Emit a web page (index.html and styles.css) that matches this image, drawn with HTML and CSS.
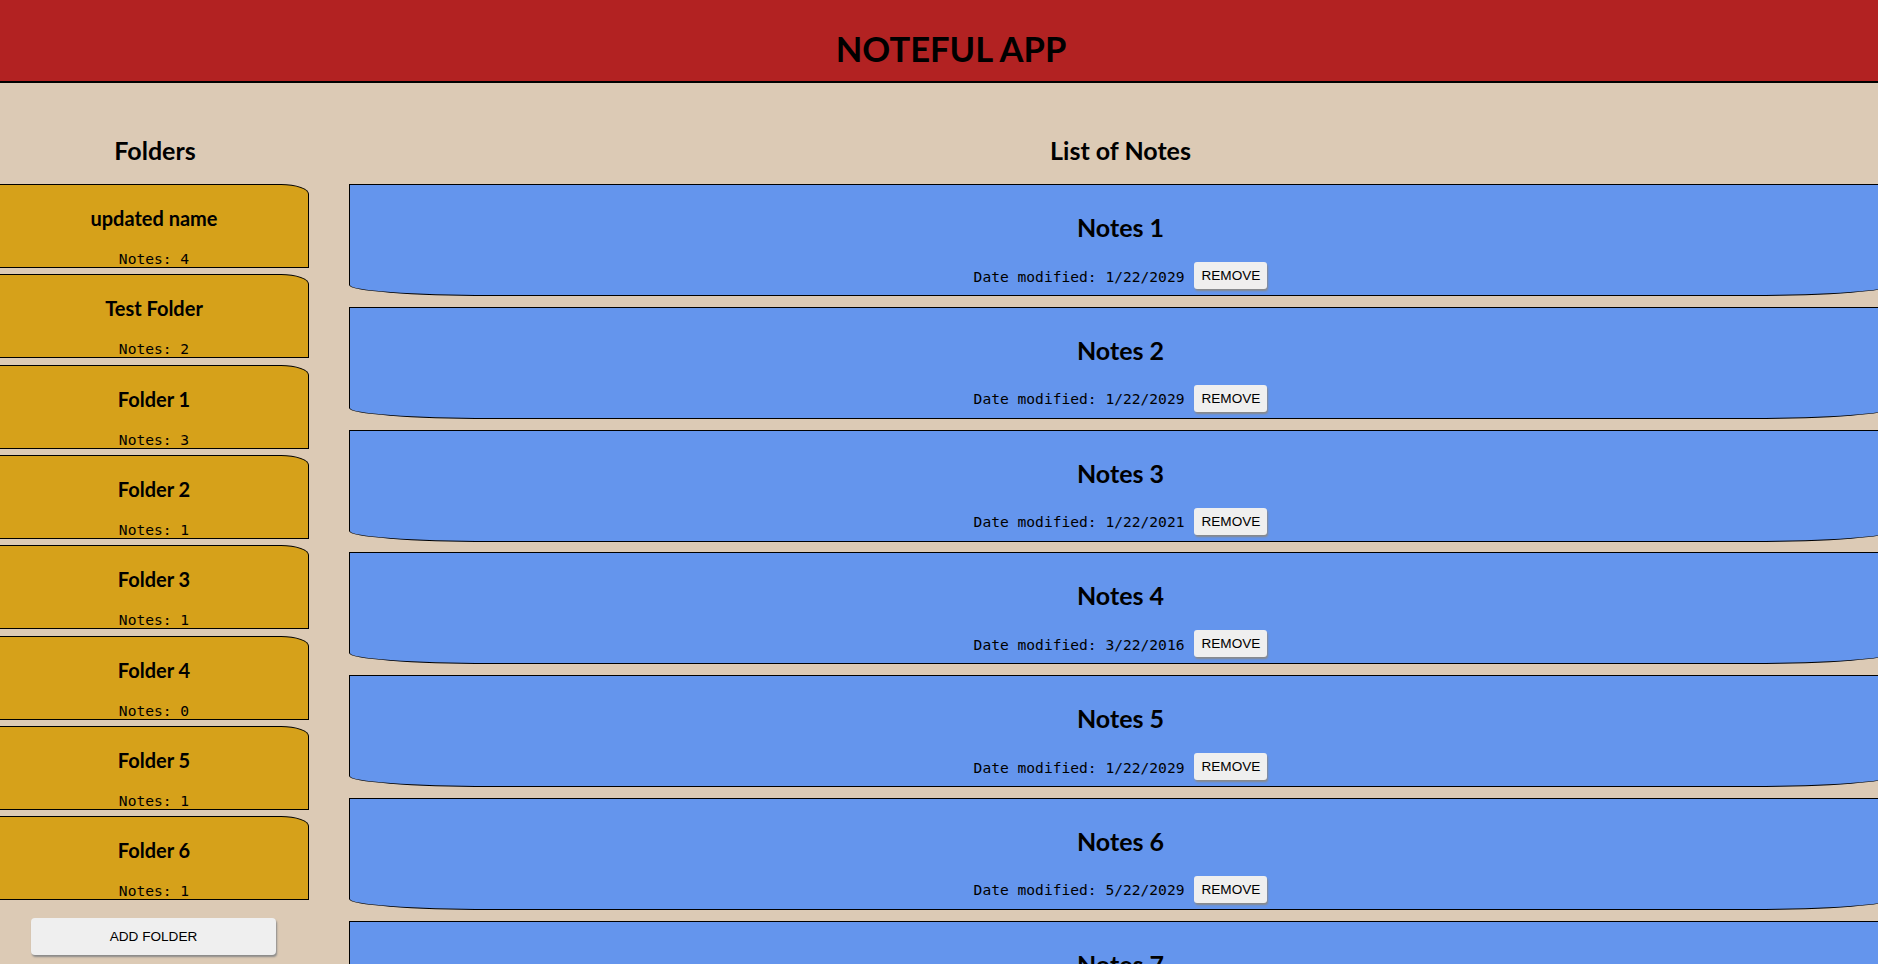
FILE: index.html
```html
<!DOCTYPE html>
<html lang="en">
<head>
<meta charset="utf-8">
<title>Noteful App</title>
<link rel="stylesheet" href="styles.css">
</head>
<body>
<div class="app">
  <header class="app-header">
    <h1 class="app-title">NOTEFUL APP</h1>
  </header>
  <div class="layout">
    <aside class="sidebar">
      <h2 class="section-title">Folders</h2>
      <ul class="folder-list">
        <li class="folder-card"><h3 class="folder-name">updated name</h3><p class="folder-count">Notes: 4</p></li>
        <li class="folder-card"><h3 class="folder-name">Test Folder</h3><p class="folder-count">Notes: 2</p></li>
        <li class="folder-card"><h3 class="folder-name">Folder 1</h3><p class="folder-count">Notes: 3</p></li>
        <li class="folder-card"><h3 class="folder-name">Folder 2</h3><p class="folder-count">Notes: 1</p></li>
        <li class="folder-card"><h3 class="folder-name">Folder 3</h3><p class="folder-count">Notes: 1</p></li>
        <li class="folder-card"><h3 class="folder-name">Folder 4</h3><p class="folder-count">Notes: 0</p></li>
        <li class="folder-card"><h3 class="folder-name">Folder 5</h3><p class="folder-count">Notes: 1</p></li>
        <li class="folder-card"><h3 class="folder-name">Folder 6</h3><p class="folder-count">Notes: 1</p></li>
      </ul>
      <div class="add-row"><button class="btn btn-add" type="button">ADD FOLDER</button></div>
    </aside>
    <main class="notes">
      <h2 class="section-title">List of Notes</h2>
      <ul class="note-list">
        <li class="note-card"><h2 class="note-title">Notes 1</h2><div class="note-meta"><span class="note-date">Date modified: 1/22/2029</span><button class="btn btn-remove" type="button">REMOVE</button></div></li>
        <li class="note-card"><h2 class="note-title">Notes 2</h2><div class="note-meta"><span class="note-date">Date modified: 1/22/2029</span><button class="btn btn-remove" type="button">REMOVE</button></div></li>
        <li class="note-card"><h2 class="note-title">Notes 3</h2><div class="note-meta"><span class="note-date">Date modified: 1/22/2021</span><button class="btn btn-remove" type="button">REMOVE</button></div></li>
        <li class="note-card"><h2 class="note-title">Notes 4</h2><div class="note-meta"><span class="note-date">Date modified: 3/22/2016</span><button class="btn btn-remove" type="button">REMOVE</button></div></li>
        <li class="note-card"><h2 class="note-title">Notes 5</h2><div class="note-meta"><span class="note-date">Date modified: 1/22/2029</span><button class="btn btn-remove" type="button">REMOVE</button></div></li>
        <li class="note-card"><h2 class="note-title">Notes 6</h2><div class="note-meta"><span class="note-date">Date modified: 5/22/2029</span><button class="btn btn-remove" type="button">REMOVE</button></div></li>
        <li class="note-card"><h2 class="note-title">Notes 7</h2><div class="note-meta"><span class="note-date">Date modified: 1/22/2029</span><button class="btn btn-remove" type="button">REMOVE</button></div></li>
      </ul>
    </main>
  </div>
</div>
</body>
</html>
```

FILE: styles.css
```css
html, body {
  margin: 0;
  padding: 0;
  overflow-x: hidden;
}

body {
  background: #dccab5;
  color: #000;
  font-family: Lato, "Noto Sans", sans-serif;
}

.app {
  width: 1902px;
}

.app-header {
  height: 81px;
  background: #b22222;
  border-bottom: 2px solid #000;
  display: flex;
  align-items: center;
  justify-content: center;
}

.app-title {
  margin: 0;
  font-size: 34.6px;
  line-height: 40px;
  font-weight: 700;
  padding-top: 17px;
}

.layout {
  display: flex;
  align-items: flex-start;
  gap: 39px;
  padding-top: 52px;
}

.sidebar {
  width: 310px;
  flex: none;
}

.notes {
  flex: 1;
  margin-right: 10px;
}

.section-title {
  margin: 0 0 19px;
  font-size: 25px;
  line-height: 30px;
  font-weight: 700;
  text-align: center;
}

.folder-list,
.note-list {
  list-style: none;
  margin: 0;
  padding: 0;
  display: flex;
  flex-direction: column;
}

.folder-list {
  gap: 6.35px;
}

.folder-card {
  width: 309px;
  box-sizing: border-box;
  height: 84px;
  background: #d6a11a;
  border: 1px solid #000;
  border-left: none;
  border-top-right-radius: 28px 10px;
  padding-top: 22px;
  text-align: center;
}

.folder-name {
  margin: 0;
  font-size: 20px;
  line-height: 22px;
  font-weight: 700;
}

.folder-count {
  margin: 22px 0 0;
  font-family: "DejaVu Sans Mono", monospace;
  font-size: 14.6px;
  line-height: 16px;
}

.add-row {
  display: flex;
  padding: 18px 0 0 31px;
}

.btn {
  font-family: "Liberation Sans", Arial, sans-serif;
  font-size: 13.33px;
  color: #000;
  background: #efefef;
  border: none;
  border-radius: 4px;
  box-shadow: 1px 2px 2px #8a8a8a;
  cursor: pointer;
}

.btn-add {
  width: 245px;
  height: 37px;
  font-size: 13.6px;
}

.note-list {
  gap: 10.77px;
}

.note-card {
  box-sizing: border-box;
  height: 112px;
  background: #6495ed;
  border: 1px solid #000;
  border-radius: 0 0 140px 140px / 0 0 11px 11px;
  padding-top: 27px;
  text-align: center;
}

.note-title {
  margin: 0;
  font-size: 25px;
  line-height: 30px;
  font-weight: 700;
}

.note-meta {
  margin-top: 20px;
  display: flex;
  justify-content: center;
  align-items: center;
  gap: 10px;
}

.note-date {
  font-family: "DejaVu Sans Mono", monospace;
  font-size: 14.6px;
  line-height: 18px;
  padding-top: 2px;
}

.btn-remove {
  height: 27px;
  padding: 0 7px;
  border-radius: 3px;
  font-size: 13.6px;
}
```
